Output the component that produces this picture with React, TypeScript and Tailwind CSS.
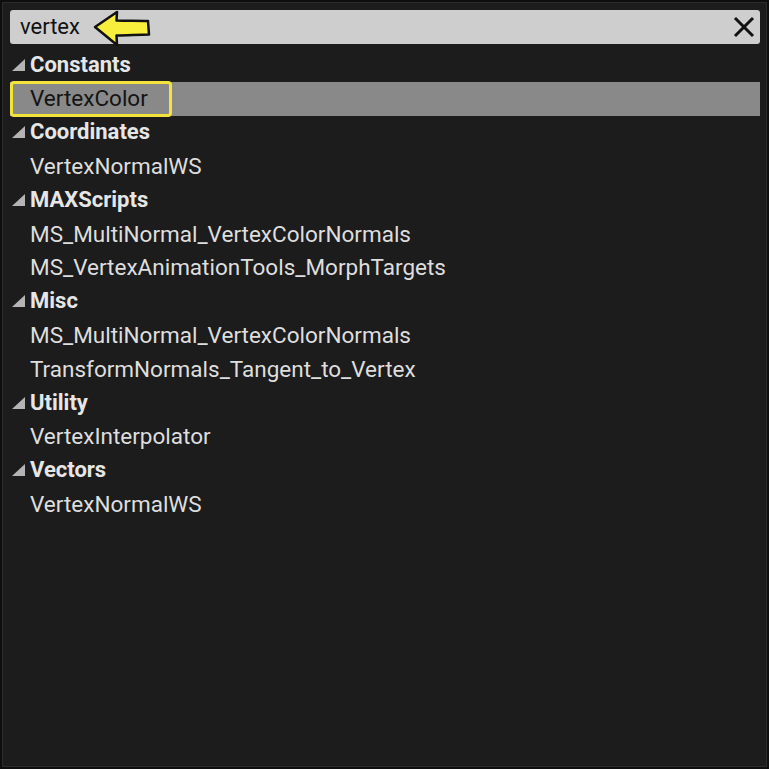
import React from 'react';

const groups = [
  { title: 'Constants', items: ['VertexColor'] },
  { title: 'Coordinates', items: ['VertexNormalWS'] },
  {
    title: 'MAXScripts',
    items: ['MS_MultiNormal_VertexColorNormals', 'MS_VertexAnimationTools_MorphTargets'],
  },
  {
    title: 'Misc',
    items: ['MS_MultiNormal_VertexColorNormals', 'TransformNormals_Tangent_to_Vertex'],
  },
  { title: 'Utility', items: ['VertexInterpolator'] },
  { title: 'Vectors', items: ['VertexNormalWS'] },
];

const font = { fontFamily: 'Roboto, "Liberation Sans", sans-serif' };

function Caret() {
  return (
    <svg width="13" height="12" viewBox="0 0 13 12" className="shrink-0">
      <polygon points="0,12 13,12 13,0" fill="#b4b4b4" />
    </svg>
  );
}

export default function App() {
  return (
    <div className="w-[769px] h-[769px] bg-[#0e0e0e] p-[2px]" style={font}>
      <div className="h-full border border-[#2c2c2c] bg-[#1c1c1c] pt-[7px] pl-[7px] pr-[6px]">
        <div className="relative h-[34px] rounded-[3px] bg-[#cecece] flex items-center pl-[10px] pr-[4px]">
          <span className="text-[22px] text-[#111] leading-none">vertex</span>
          <svg
            className="absolute left-[83px] top-[0px]"
            width="60"
            height="37"
            viewBox="0 0 60 37"
          >
            <path
              d="M2 17 L24 2 L23.5 10.5 C34 11 45 10.5 55 11 L56 24.5 C45 25 34 25 23.5 25.5 L24 35 Z"
              fill="#f8ee3c"
              stroke="#111"
              strokeWidth="2.5"
              strokeLinejoin="round"
            />
          </svg>
          <div className="ml-auto">
            <svg width="24" height="24" viewBox="0 0 24 24">
              <path d="M3 3 L21 21 M21 3 L3 21" stroke="#111" strokeWidth="3" strokeLinecap="butt" />
            </svg>
          </div>
        </div>

        <div className="mt-[4px]">
          {groups.map((g, gi) => (
            <div key={g.title}>
              <div className="h-[33.8px] flex items-center gap-[5px] pl-[2px]">
                <Caret />
                <span className="text-[22px] font-bold text-[#e6e6e6] leading-none">{g.title}</span>
              </div>
              {g.items.map((item, ii) => {
                const selected = gi === 0 && ii === 0;
                return (
                  <div
                    key={item + ii}
                    className={`relative h-[33.8px] flex items-center pl-[20px] ${selected ? 'bg-[#898989]' : ''}`}
                  >
                    {selected && (
                      <div className="absolute left-0 top-[-1px] w-[162px] h-[36px] rounded-[4px] border-[3px] border-[#f2e43c]" />
                    )}
                    <span
                      className={`text-[22.5px] leading-none ${selected ? 'text-[#141414]' : 'text-[#dedede]'}`}
                    >
                      {item}
                    </span>
                  </div>
                );
              })}
            </div>
          ))}
        </div>
      </div>
    </div>
  );
}
